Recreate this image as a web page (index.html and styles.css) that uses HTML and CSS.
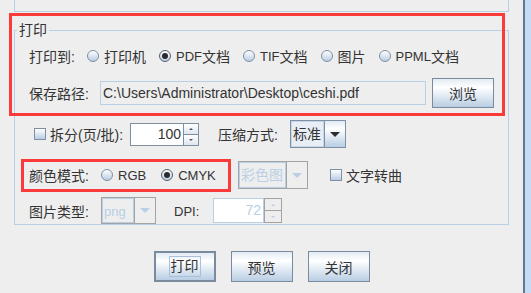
FILE: index.html
```html
<!DOCTYPE html>
<html>
<head>
<meta charset="utf-8">
<link rel="stylesheet" href="styles.css">
</head>
<body>
<div class="window">
  <div class="main">
    <div class="toppanel"></div>
    <fieldset class="group">
      <legend>打印</legend>
      <div class="content">
        <div class="row r1">
          <span class="lbl w58">打印到:</span>
          <label class="opt"><span class="radio"></span>打印机</label>
          <label class="opt"><span class="radio on"></span><span class="l">PDF</span>文档</label>
          <label class="opt"><span class="radio"></span><span class="l">TIF</span>文档</label>
          <label class="opt"><span class="radio"></span>图片</label>
          <label class="opt"><span class="radio"></span><span class="l">PPML</span>文档</label>
        </div>
        <div class="row r2">
          <span class="lbl w71">保存路径:</span>
          <div class="field path">C:\Users\Administrator\Desktop\ceshi.pdf</div>
          <button class="btn browse">浏览</button>
        </div>
        <div class="row r3">
          <label class="chkopt split"><span class="check"></span>拆分(页/批):</label>
          <div class="spinner">
            <div class="spin-text">100</div>
            <div class="spin-arrows"><span class="up"></span><span class="down"></span></div>
          </div>
          <span class="lbl compress">压缩方式:</span>
          <div class="combo std">
            <div class="combo-text">标准</div>
            <div class="combo-btn"><span class="tri"></span></div>
          </div>
        </div>
        <div class="row r4">
          <span class="lbl w72">颜色模式:</span>
          <div class="opts">
            <label class="opt rgb"><span class="radio"></span><span class="l">RGB</span></label>
            <label class="opt"><span class="radio on"></span><span class="l">CMYK</span></label>
          </div>
          <div class="combo off color">
            <div class="combo-text">彩色图</div>
            <div class="combo-btn"><span class="tri"></span></div>
          </div>
          <label class="chkopt curve"><span class="check"></span>文字转曲</label>
        </div>
        <div class="row r5">
          <span class="lbl w72">图片类型:</span>
          <div class="combo off png">
            <div class="combo-text"><span class="l">png</span></div>
            <div class="combo-btn"><span class="tri"></span></div>
          </div>
          <span class="lbl dpi"><span class="l">DPI:</span></span>
          <div class="spinner off">
            <div class="spin-text">72</div>
            <div class="spin-arrows"><span class="up"></span><span class="down"></span></div>
          </div>
        </div>
      </div>
    </fieldset>
    <div class="buttons">
      <button class="btn default"><span class="focus">打印</span></button>
      <button class="btn">预览</button>
      <button class="btn">关闭</button>
    </div>
  </div>
  <div class="edge"></div>
</div>
<div class="mark m1"></div>
<div class="mark m2"></div>
</body>
</html>
```

FILE: styles.css
```css
html, body {
  margin: 0;
  padding: 0;
}
body {
  width: 531px;
  height: 293px;
  overflow: hidden;
  position: relative;
  background: #eeeeee;
  color: #333333;
  font-family: "Liberation Sans", "Noto Sans CJK SC", sans-serif;
  font-size: 14px;
}
.window {
  display: flex;
  height: 293px;
}
.main {
  width: 523px;
  flex: none;
}
.edge {
  flex: none;
  width: 8px;
  box-sizing: border-box;
  border-left: 2px solid #67778a;
  background: #c6dcf6;
}
.toppanel {
  margin-left: 14px;
  width: 495px;
  height: 12px;
  box-sizing: border-box;
  border: 1px solid #b8cfe5;
  border-top: 0;
}
.group {
  margin: 10px 0 0 14px;
  width: 495px;
  box-sizing: border-box;
  border: 1px solid #b8cfe5;
  padding: 0;
  min-width: 0;
}
.group legend {
  margin-left: 2px;
  padding: 0 2px;
  line-height: 16px;
  font-size: 14px;
}
.content {
  padding-left: 14px;
}
.row {
  display: flex;
  align-items: center;
  white-space: nowrap;
}
.r1 { margin-top: 6px; height: 24px; }
.r2 { margin-top: 10px; height: 30px; }
.r3 { margin-top: 12px; height: 28px; }
.r4 { margin-top: 13px; height: 28px; }
.r5 { margin-top: 8px; height: 27px; }

.l { font-size: 13px; }
.lbl { flex: none; }
.w58 { width: 58px; }
.w71 { width: 71px; }
.w72 { width: 72px; }

.opt {
  display: flex;
  align-items: center;
  margin-right: 13px;
}
.radio {
  flex: none;
  width: 12px;
  height: 12px;
  box-sizing: border-box;
  border-radius: 50%;
  border: 1px solid #7f8fa1;
  background: linear-gradient(#ffffff, #b9cde3);
  margin-right: 5px;
  position: relative;
}
.radio.on {
  border-color: #55606c;
}
.radio.on::after {
  content: "";
  position: absolute;
  left: 2px;
  top: 2px;
  width: 6px;
  height: 6px;
  border-radius: 50%;
  background: #2b2b2b;
}

.field.path {
  width: 326px;
  height: 24px;
  box-sizing: border-box;
  border: 1px solid #b8cfe5;
  padding-left: 2px;
  line-height: 22px;
  overflow: hidden;
}

.btn {
  flex: none;
  width: 62px;
  height: 30px;
  box-sizing: border-box;
  border: 1px solid #7b8a9c;
  padding: 0;
  margin: 0;
  font-family: inherit;
  font-size: 14px;
  color: #333333;
  background: linear-gradient(#e2ebf4 0%, #ffffff 30%, #e6eef6 55%, #b9cde3 100%);
}
.browse { margin-left: 6px; }

.chkopt {
  display: flex;
  align-items: center;
}
.check {
  flex: none;
  width: 12px;
  height: 12px;
  box-sizing: border-box;
  border: 1px solid #7f8fa1;
  background: linear-gradient(#ffffff, #b9cde3);
  margin-right: 4px;
}
.split {
  margin-left: 5px;
  width: 96px;
}

.spinner {
  flex: none;
  display: flex;
  width: 69px;
  height: 23px;
  box-sizing: border-box;
  border: 1px solid #7f8fa1;
}
.spin-text {
  flex: 1;
  background: #ffffff;
  text-align: right;
  padding-right: 2px;
  line-height: 21px;
}
.spin-arrows {
  width: 14px;
  flex: none;
  display: flex;
  flex-direction: column;
  border-left: 1px solid #7f8fa1;
}
.spin-arrows span {
  flex: 1;
  position: relative;
  background: linear-gradient(#ffffff, #dde6f0);
}
.spin-arrows .up {
  border-bottom: 1px solid #7f8fa1;
}
.spin-arrows span::after {
  content: "";
  position: absolute;
  left: 50%;
  top: 50%;
  margin-left: -2px;
  margin-top: -1px;
  border-left: 2px solid transparent;
  border-right: 2px solid transparent;
}
.spin-arrows .up::after { border-bottom: 2px solid #555; }
.spin-arrows .down::after { border-top: 2px solid #555; }

.compress {
  margin-left: 19px;
  width: 72px;
}

.combo {
  flex: none;
  display: flex;
  height: 28px;
  box-sizing: border-box;
  border: 1px solid #7f8fa5;
}
.combo-text {
  flex: 1;
  box-sizing: border-box;
  border: 1px solid #c7d6e6;
  background: #e8eef5;
  padding-left: 1px;
  line-height: 24px;
}
.combo-btn {
  flex: none;
  width: 20px;
  border-left: 1px solid #7f8fa5;
  background: linear-gradient(#e2ebf4 0%, #ffffff 30%, #e6eef6 55%, #b9cde3 100%);
  display: flex;
  align-items: center;
  justify-content: center;
}
.tri {
  width: 0;
  height: 0;
  border-left: 5px solid transparent;
  border-right: 5px solid transparent;
  border-top: 5px solid #2e2e2e;
}
.std { width: 56px; }

.combo.off {
  border-color: #a3a3a3;
}
.combo.off .combo-text {
  border-color: #b8cfe5;
  background: #eeeeee;
  color: #b8cfe5;
}
.combo.off .combo-btn {
  border-left-color: #a3a3a3;
  background: #eeeeee;
}
.combo.off .tri {
  border-top-color: #b8cfe5;
}
.opts {
  display: flex;
  width: 137px;
}
.rgb { margin-right: 15px; }
.color { width: 70px; }
.curve { margin-left: 22px; }

.png { width: 55px; height: 27px; }
.dpi {
  margin-left: 18px;
  width: 39px;
}
.spinner.off {
  height: 25px;
  border-color: #a3a3a3;
}
.spinner.off .spin-text {
  color: #b8cfe5;
  border: 1px solid #b8cfe5;
  margin: -1px 0 -1px -1px;
  line-height: 23px;
}
.spinner.off .spin-arrows {
  width: 16px;
  border-left-color: #a3a3a3;
}
.spinner.off .spin-arrows span {
  background: #eeeeee;
}
.spinner.off .spin-arrows .up { border-bottom-color: #a3a3a3; }
.spinner.off .spin-arrows .up::after { border-bottom-color: #b8cfe5; }
.spinner.off .spin-arrows .down::after { border-top-color: #b8cfe5; }

.buttons {
  display: flex;
  justify-content: center;
  gap: 15px;
  margin-top: 26px;
}
.buttons .btn { width: 62px; height: 31px; }
.btn.default {
  border: 2px solid #7b8a9c;
}
.focus {
  display: inline-block;
  border: 1px solid #a9c0da;
  padding: 0 1px;
  line-height: 19px;
}

.mark {
  position: absolute;
  box-sizing: border-box;
  border: 3px solid #fb3a3a;
}
.m1 { left: 9px; top: 13px; width: 496px; height: 103px; }
.m2 { left: 21px; top: 159px; width: 210px; height: 33px; }
```
